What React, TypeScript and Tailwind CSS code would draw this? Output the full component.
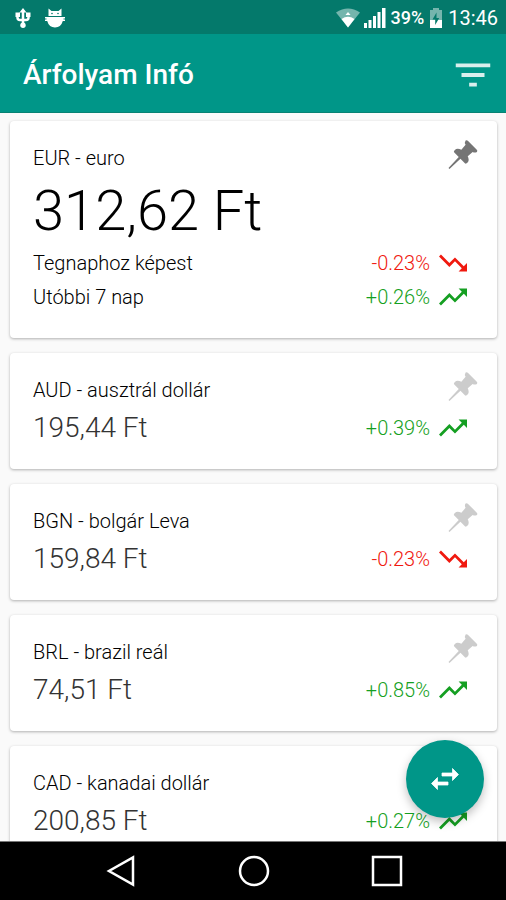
import { useState } from "react";

type Rate = {
    code: string;
    name: string;
    value: string;
    change: string;
};

const rates: Rate[] = [
    { code: "AUD", name: "ausztrál dollár", value: "195,44 Ft", change: "+0.39%" },
    { code: "BGN", name: "bolgár Leva", value: "159,84 Ft", change: "-0.23%" },
    { code: "BRL", name: "brazil reál", value: "74,51 Ft", change: "+0.85%" },
    { code: "CAD", name: "kanadai dollár", value: "200,85 Ft", change: "+0.27%" },
];

function StatusBar() {
    return (
        <div className="flex h-[34px] shrink-0 items-center justify-between bg-[#04796b] pl-[15px] pr-2 pt-[2px] text-white">
            <div className="flex items-center gap-[14px]">
                <svg viewBox="0 0 16 20" className="h-5 w-4" fill="none" stroke="currentColor" strokeWidth="2.5">
                    <path d="M8 2v15M2.5 6v3.500q0 2.500 2.500 2.500h6q2.500 0 2.500-2.500V6" />
                    <path d="M8 0l3.500 4.500h-7zM.5 4.500h4.500v4.500h-4.500zM11 4.500h4.500v4.500h-4.500z" fill="currentColor" stroke="none" />
                    <circle cx="8" cy="17.300" r="2.700" fill="currentColor" stroke="none" />
                </svg>
                <svg viewBox="0 0 20 20" className="size-5" fill="currentColor">
                    <path d="M3.500 0.500L6.500 3h7l3-2.500V8h-13z" />
                    <path d="M0 9h20v1.500h-1.500v1H20V13h-2.200Q16 19.500 10 19.500T2.200 13H0v-1.500h1.500v-1H0z" />
                    <circle cx="7" cy="5.500" r=".8" fill="#04796b" />
                    <circle cx="13" cy="5.500" r=".8" fill="#04796b" />
                </svg>
            </div>
            <div className="flex items-center gap-1">
                <svg viewBox="0 0 24 20" className="h-5 w-6" fill="currentColor">
                    <path d="M0 4.500Q12-3.500 24 4.500L12 19.500z" opacity=".45" />
                    <path d="M5.500 11Q12 6.500 18.500 11L12 19.500z" />
                    <path d="M9.500 7L12 4l2.500 3z" />
                </svg>
                <svg viewBox="0 0 22 20" className="h-5 w-[22px]" fill="currentColor">
                    <path d="M0 15h3v5H0zM4.500 12h3v8h-3zM9 8h3v12H9zM13.500 4h3v16h-3zM18 0h3.500v20H18z" />
                </svg>
                <span className="text-lg font-medium leading-6">39%</span>
                <svg viewBox="0 0 16 20" className="h-5 w-4" fill="currentColor">
                    <path d="M5 0h6v2h3v10H2V2h3z" opacity=".45" />
                    <path d="M2 12h12v8H2z" />
                    <path d="M8.500 4.500L4.500 11.500h2.700V17l4-7H8.500z" fill="#04796b" />
                </svg>
                <span className="text-xl leading-6">13:46</span>
            </div>
        </div>
    );
}

function PinButton({ label, defaultPinned = false }: { label: string; defaultPinned?: boolean }) {
    const [pinned, setPinned] = useState(defaultPinned);

    return (
        <button
            type="button"
            aria-label={label}
            aria-pressed={pinned}
            onClick={() => setPinned(!pinned)}
            className={pinned ? "text-[#757575]" : "text-[#cccccc]"}
        >
            <svg viewBox="0 0 28 28" className="size-7 overflow-visible" fill="currentColor">
                <path
                    transform="translate(12 15.500) rotate(45)"
                    d="M-6-16Q-8-16-8-14.500Q-7.500-12-5-11.500L-4.500-5Q-9-3.500-9 0Q-9 2-7.500 2H-1.200L-.7 17H.7L1.200 2H7.500Q9 2 9 0Q9-3.500 4.500-5L5-11.500Q7.500-12 8-14.500Q8-16 6-16z"
                />
            </svg>
        </button>
    );
}

function Change({ value }: { value: string }) {
    const down = value.startsWith("-");

    return (
        <div
            className={
                down
                    ? "flex items-center gap-[9px] text-[#f0190f]"
                    : "flex items-center gap-[9px] text-[#159f22]"
            }
        >
            <span className="text-xl font-light leading-6">{value}</span>
            <svg viewBox="2 5 20 14" className="h-5 w-7" fill="currentColor">
                {down ? (
                    <path d="M16 18l2.290-2.290-4.880-4.880-4 4L2 7.410 3.410 6l6 6 4-4 6.300 6.290L22 12v6z" />
                ) : (
                    <path d="M16 6l2.290 2.290-4.880 4.880-4-4L2 16.590 3.410 18l6-6 4 4 6.300-6.290L22 12V6z" />
                )}
            </svg>
        </div>
    );
}

function RateCard({ rate }: { rate: Rate }) {
    return (
        <article className="rounded-sm bg-white pb-6 pl-[23px] pr-5 pt-5 shadow-[0_1px_3px_rgba(0,0,0,0.3)]">
            <div className="flex h-8 items-start justify-between">
                <h2 className="pt-[3px] text-xl font-light leading-7">
                    {rate.code} - {rate.name}
                </h2>
                <PinButton label={`${rate.name} rögzítése`} />
            </div>
            <div className="flex h-10 items-center justify-between pr-[10px] pt-[6px]">
                <p className="text-[28px] font-light leading-9 text-[#333333]">{rate.value}</p>
                <Change value={rate.change} />
            </div>
        </article>
    );
}

export default function App() {
    return (
        <div className="flex h-screen flex-col bg-[#fafafa] font-['Roboto',sans-serif] text-black">
            <StatusBar />
            <header className="flex h-[79px] shrink-0 items-center justify-between border-b border-[#078273] bg-[#009688] pl-[23px] pr-[10px] pt-1 text-white">
                <h1 className="text-[28px] font-medium leading-9">Árfolyam Infó</h1>
                <button type="button" aria-label="Szűrés" className="text-white/85">
                    <svg viewBox="0 0 24 24" className="size-[46px]" fill="currentColor">
                        <path d="M10 18h4v-2h-4v2zM3 6v2h18V6H3zm3 7h12v-2H6v2z" />
                    </svg>
                </button>
            </header>

            <div className="relative min-h-0 flex-1">
                <main className="flex h-full flex-col gap-[15px] overflow-hidden pl-[10px] pr-[9px] pt-2 [&>*]:shrink-0">
                    <article className="rounded-sm bg-white pb-6 pl-[23px] pr-5 pt-5 shadow-[0_1px_3px_rgba(0,0,0,0.3)]">
                        <div className="flex h-8 items-start justify-between">
                            <h2 className="pt-[3px] text-xl font-light leading-7">EUR - euro</h2>
                            <PinButton label="euro rögzítése" defaultPinned />
                        </div>
                        <p className="h-[73px] text-[56px] font-light leading-[76px]">312,62 Ft</p>
                        <div className="flex h-[34px] items-center justify-between pr-[10px]">
                            <span className="text-xl font-light leading-6">Tegnaphoz képest</span>
                            <Change value="-0.23%" />
                        </div>
                        <div className="flex h-[34px] items-center justify-between pr-[10px]">
                            <span className="text-xl font-light leading-6">Utóbbi 7 nap</span>
                            <Change value="+0.26%" />
                        </div>
                    </article>
                    {rates.map((rate) => (
                        <RateCard key={rate.code} rate={rate} />
                    ))}
                </main>
                <button
                    type="button"
                    aria-label="Átváltás"
                    className="absolute bottom-[23px] right-[22px] flex size-[78px] items-center justify-center rounded-full bg-[#009688] text-white shadow-[0_4px_10px_rgba(0,0,0,0.25)]"
                >
                    <svg viewBox="0 0 24 24" className="size-9" fill="currentColor" stroke="currentColor" strokeWidth=".5">
                        <path d="M6.990 11L3 15l3.990 4v-3H14v-2H6.990v-3zM21 9l-3.990-4v3H10v2h7.010v3L21 9z" />
                    </svg>
                </button>
            </div>

            <nav className="flex h-[59px] shrink-0 items-center border-t border-[#777777] bg-black pl-[54px] pr-[52px] text-white [&>button]:flex [&>button]:flex-1 [&>button]:justify-center">
                <button type="button" aria-label="Vissza">
                    <svg viewBox="0 0 32 32" className="size-8" fill="none" stroke="currentColor" strokeWidth="2.5">
                        <path d="M28 2.500v27L4 16z" />
                    </svg>
                </button>
                <button type="button" aria-label="Kezdőképernyő">
                    <svg viewBox="0 0 32 32" className="size-8" fill="none" stroke="currentColor" strokeWidth="2.5">
                        <circle cx="16" cy="16" r="14" />
                    </svg>
                </button>
                <button type="button" aria-label="Áttekintés">
                    <svg viewBox="0 0 32 32" className="size-8" fill="none" stroke="currentColor" strokeWidth="2.5">
                        <path d="M2 2h28v28H2z" />
                    </svg>
                </button>
            </nav>
        </div>
    );
}
